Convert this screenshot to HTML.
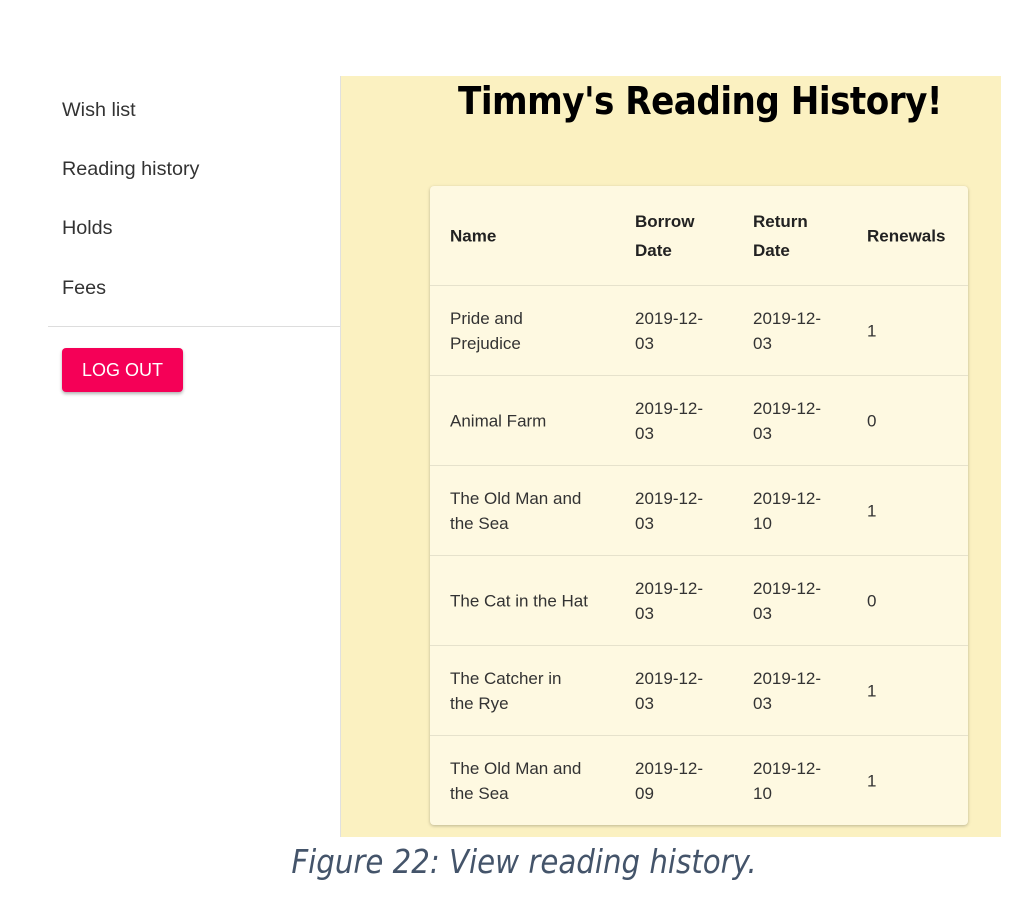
<!DOCTYPE html>
<html><head><style>
body{margin:0;width:1032px;height:916px;background:#fff;position:relative;font-family:"Liberation Sans",Arial,sans-serif;overflow:hidden}
.nav{position:absolute;left:62px;font-size:19.8px;color:#333}
.panel{position:absolute;left:340px;top:76px;width:660px;height:761px;background:#fbf1c1;border-left:1px solid #e0e0e0}
h1{position:absolute;left:458px;top:79px;margin:0;font-size:38px;font-weight:bold;font-family:"DejaVu Sans Condensed","DejaVu Sans",sans-serif;letter-spacing:-0.5px}
.card{position:absolute;left:430px;top:186px;width:538px;height:639px;background:#fef9e1;border-radius:4px;box-shadow:0 1px 3px rgba(0,0,0,.25)}
.row{position:absolute;left:0;width:538px;height:90px;border-top:1px solid #e6e2cc;font-size:17px;color:#333;line-height:25px}
.c{position:absolute;top:50%;transform:translateY(-50%)}
.hd{font-weight:bold;color:#222}
</style></head><body>
<div class="nav" style="top:99px">Wish list</div>
<div class="nav" style="top:158px">Reading history</div>
<div class="nav" style="top:217px">Holds</div>
<div class="nav" style="top:277px">Fees</div>
<div style="position:absolute;left:48px;top:326px;width:292px;height:1px;background:#ddd"></div>
<div style="position:absolute;left:62px;top:348px;width:121px;height:44px;background:#f50057;border-radius:4px;box-shadow:0 2px 3px rgba(0,0,0,.3);color:#fff;font-size:18px;line-height:44px;text-align:center">LOG OUT</div>
<div class="panel"></div>
<h1>Timmy's Reading History!</h1>
<div class="card">
<div class="row hd" style="top:0;height:99px;border-top:none;line-height:29px">
<div class="c" style="left:20px">Name</div><div class="c" style="left:205px">Borrow<br>Date</div><div class="c" style="left:323px">Return<br>Date</div><div class="c" style="left:437px">Renewals</div></div>
<div class="row" style="top:99px"><div class="c" style="left:20px">Pride and<br>Prejudice</div><div class="c" style="left:205px">2019-12-<br>03</div><div class="c" style="left:323px">2019-12-<br>03</div><div class="c" style="left:437px">1</div></div>
<div class="row" style="top:189px"><div class="c" style="left:20px">Animal Farm</div><div class="c" style="left:205px">2019-12-<br>03</div><div class="c" style="left:323px">2019-12-<br>03</div><div class="c" style="left:437px">0</div></div>
<div class="row" style="top:279px"><div class="c" style="left:20px">The Old Man and<br>the Sea</div><div class="c" style="left:205px">2019-12-<br>03</div><div class="c" style="left:323px">2019-12-<br>10</div><div class="c" style="left:437px">1</div></div>
<div class="row" style="top:369px"><div class="c" style="left:20px">The Cat in the Hat</div><div class="c" style="left:205px">2019-12-<br>03</div><div class="c" style="left:323px">2019-12-<br>03</div><div class="c" style="left:437px">0</div></div>
<div class="row" style="top:459px"><div class="c" style="left:20px">The Catcher in<br>the Rye</div><div class="c" style="left:205px">2019-12-<br>03</div><div class="c" style="left:323px">2019-12-<br>03</div><div class="c" style="left:437px">1</div></div>
<div class="row" style="top:549px"><div class="c" style="left:20px">The Old Man and<br>the Sea</div><div class="c" style="left:205px">2019-12-<br>09</div><div class="c" style="left:323px">2019-12-<br>10</div><div class="c" style="left:437px">1</div></div>
</div>
<div style="position:absolute;left:0;width:1048px;top:843px;text-align:center;font-style:italic;font-size:32.5px;color:#44546a;font-family:'DejaVu Sans Condensed','DejaVu Sans',sans-serif">Figure 22: View reading history.</div>
</body></html>
